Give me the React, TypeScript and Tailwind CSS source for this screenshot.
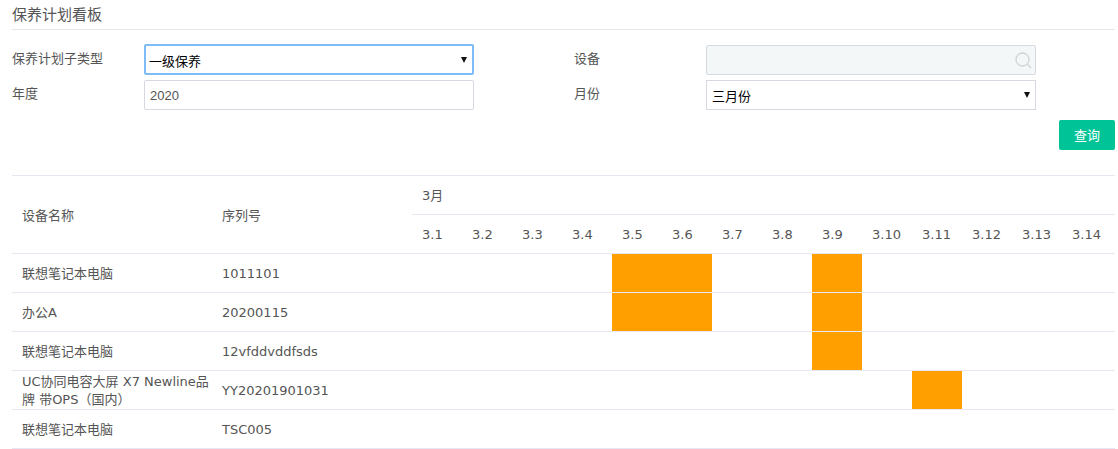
const days = ["3.1","3.2","3.3","3.4","3.5","3.6","3.7","3.8","3.9","3.10","3.11","3.12","3.13","3.14"];
const rows: { name: string; sn: string; on: number[]; tight?: boolean }[] = [
  { name: "联想笔记本电脑", sn: "1011101", on: [4, 5, 8] },
  { name: "办公A", sn: "20200115", on: [4, 5, 8] },
  { name: "联想笔记本电脑", sn: "12vfddvddfsds", on: [8] },
  { name: "UC协同电容大屏 X7 Newline品牌 带OPS（国内）", sn: "YY20201901031", on: [10], tight: true },
  { name: "联想笔记本电脑", sn: "TSC005", on: [] },
];
const font = "font-['DejaVu_Sans','Noto_Sans_CJK_SC',sans-serif]";

function Field({ label, children }: { label: string; children: React.ReactNode }) {
  return (
    <div className="flex items-start">
      <label className="w-[132px] pt-[4px] text-[13px] leading-[20px] text-[#555]">{label}</label>
      {children}
    </div>
  );
}

function Arrow({ top }: { top: string }) {
  return (
    <svg className={`absolute right-[5px] ${top}`} width="6" height="6" viewBox="0 0 6 6" fill="#111">
      <path d="M0 0H6L3 6Z" />
    </svg>
  );
}

export default function App() {
  return (
    <div className={`${font} w-[1118px] h-[449px] overflow-hidden bg-white pl-[12px] pr-[3px] text-[13px] text-[#555]`}>
      <div className="h-[30px] border-b border-[#e7e7eb] pt-[5px] text-[15px] leading-[20px]">保养计划看板</div>
      <div className="mt-[15px] grid grid-cols-[562px_1fr] gap-y-[5px]">
        <Field label="保养计划子类型">
          <div className="relative -mt-[1px] h-[31px] w-[330px] rounded-[2px] border-2 border-[#7dbcf5] pl-[3px] pt-[6px] text-[13px] leading-[20px] text-black">
            一级保养<Arrow top="top-[11px]" />
          </div>
        </Field>
        <Field label="设备">
          <div className="relative h-[30px] w-[330px] rounded-[2px] border border-[#d7d9e2] bg-[#f4f7f8]">
            <svg className="absolute right-[3px] top-[6px]" width="17" height="17" viewBox="0 0 17 17" fill="none" stroke="#cfd2d6" strokeWidth="1.3">
              <circle cx="7.5" cy="7.5" r="6.5" /><path d="M12.5 12.5 16 16" />
            </svg>
          </div>
        </Field>
        <Field label="年度">
          <div className="h-[30px] w-[330px] rounded-[2px] border border-[#d7d9e2] pl-[5px] pt-[5px] font-['Liberation_Sans',sans-serif] text-[13px] leading-[20px] text-[#555]">2020</div>
        </Field>
        <Field label="月份">
          <div className="relative h-[30px] w-[330px] border border-[#d7d9e2] pl-[5px] pt-[6px] leading-[20px] text-black">
            三月份<Arrow top="top-[11px]" />
          </div>
        </Field>
      </div>
      <div className="mt-[10px] flex justify-end">
        <button className="h-[30px] w-[56px] rounded-[2px] bg-[#00c497] pt-[2px] text-[13px] text-white">查询</button>
      </div>
      <div className="mt-[25px] border-t border-[#e7e7f3]">
        <div className="flex h-[78px] border-b border-[#e7e7f3]">
          <div className="flex w-[200px] items-center pl-[10px] pt-[2px]">设备名称</div>
          <div className="flex w-[200px] items-center pl-[10px] pt-[2px]">序列号</div>
          <div className="flex-1">
            <div className="flex h-[39px] items-center border-b border-[#e7e7f3] pl-[10px] pt-[2px]">3月</div>
            <div className="flex h-[38px]">
              {days.map((d) => (
                <div key={d} className="flex w-[50px] items-center pl-[10px] pt-[1px]">{d}</div>
              ))}
            </div>
          </div>
        </div>
        {rows.map((r, i) => (
          <div key={i} className="flex h-[39px] border-b border-[#e7e7f3]">
            <div className={`flex w-[200px] items-center pl-[10px] pt-[2px] ${r.tight ? "leading-[18px]" : ""}`}>
              <span className="block">{r.name}</span>
            </div>
            <div className="flex w-[200px] items-center pl-[10px] pt-[2px]">{r.sn}</div>
            {days.map((d, j) => (
              <div key={d} className={`w-[50px] ${r.on.includes(j) ? "bg-[#ff9f00]" : ""}`} />
            ))}
          </div>
        ))}
      </div>
    </div>
  );
}
